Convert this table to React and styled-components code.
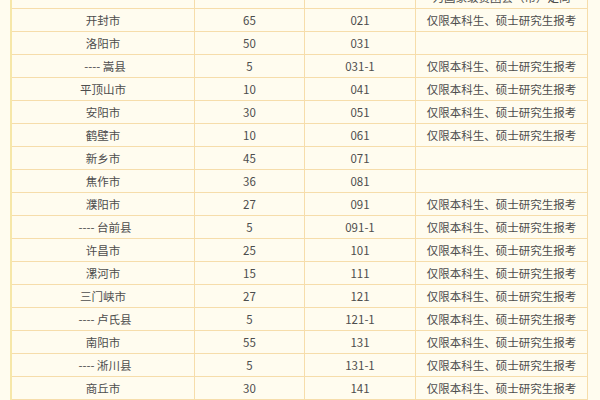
import React from 'react';
import styled, { createGlobalStyle } from 'styled-components';

const GlobalStyle = createGlobalStyle`
  html, body {
    margin: 0;
    padding: 0;
    background-color: #fffcef;
    overflow: hidden;
  }
`;

const Page = styled.div`
  width: 600px;
  height: 400px;
  overflow: hidden;
  padding-left: 10px;
  box-sizing: border-box;
  font-family: "Noto Sans CJK SC", "Liberation Sans", sans-serif;
  font-size: 11.5px;
  color: #4d4d4d;
`;

const Table = styled.div`
  margin-top: -14px;
  width: 578px;
  border-left: 2px solid #f6e7a9;
`;

const Row = styled.div`
  display: grid;
  grid-template-columns: 183px 110px 111px 172px;
  height: 23px;
`;

const Cell = styled.div`
  display: flex;
  align-items: center;
  justify-content: center;
  border-right: 1px solid #f6ddab;
  border-bottom: 1px solid #f6ddab;
  white-space: nowrap;
  overflow: hidden;
  padding-left: ${(p) => (p.$sub ? '4px' : '0')};
`;

const NOTE = '仅限本科生、硕士研究生报考';

const rows = [
  ['', '', '', '为国家级贫困县（市）定向'],
  ['开封市', '65', '021', NOTE],
  ['洛阳市', '50', '031', ''],
  ['---- 嵩县', '5', '031-1', NOTE, true],
  ['平顶山市', '10', '041', NOTE],
  ['安阳市', '30', '051', NOTE],
  ['鹤壁市', '10', '061', NOTE],
  ['新乡市', '45', '071', ''],
  ['焦作市', '36', '081', ''],
  ['濮阳市', '27', '091', NOTE],
  ['---- 台前县', '5', '091-1', NOTE, true],
  ['许昌市', '25', '101', NOTE],
  ['漯河市', '15', '111', NOTE],
  ['三门峡市', '27', '121', NOTE],
  ['---- 卢氏县', '5', '121-1', NOTE, true],
  ['南阳市', '55', '131', NOTE],
  ['---- 淅川县', '5', '131-1', NOTE, true],
  ['商丘市', '30', '141', NOTE],
];

const App = () => {
  return (
    <Page>
      <GlobalStyle />
      <Table>
        {rows.map(([name, count, code, note, sub], i) => (
          <Row key={i}>
            <Cell $sub={sub}>{name}</Cell>
            <Cell>{count}</Cell>
            <Cell>{code}</Cell>
            <Cell>{note}</Cell>
          </Row>
        ))}
      </Table>
    </Page>
  );
};

export default App;
